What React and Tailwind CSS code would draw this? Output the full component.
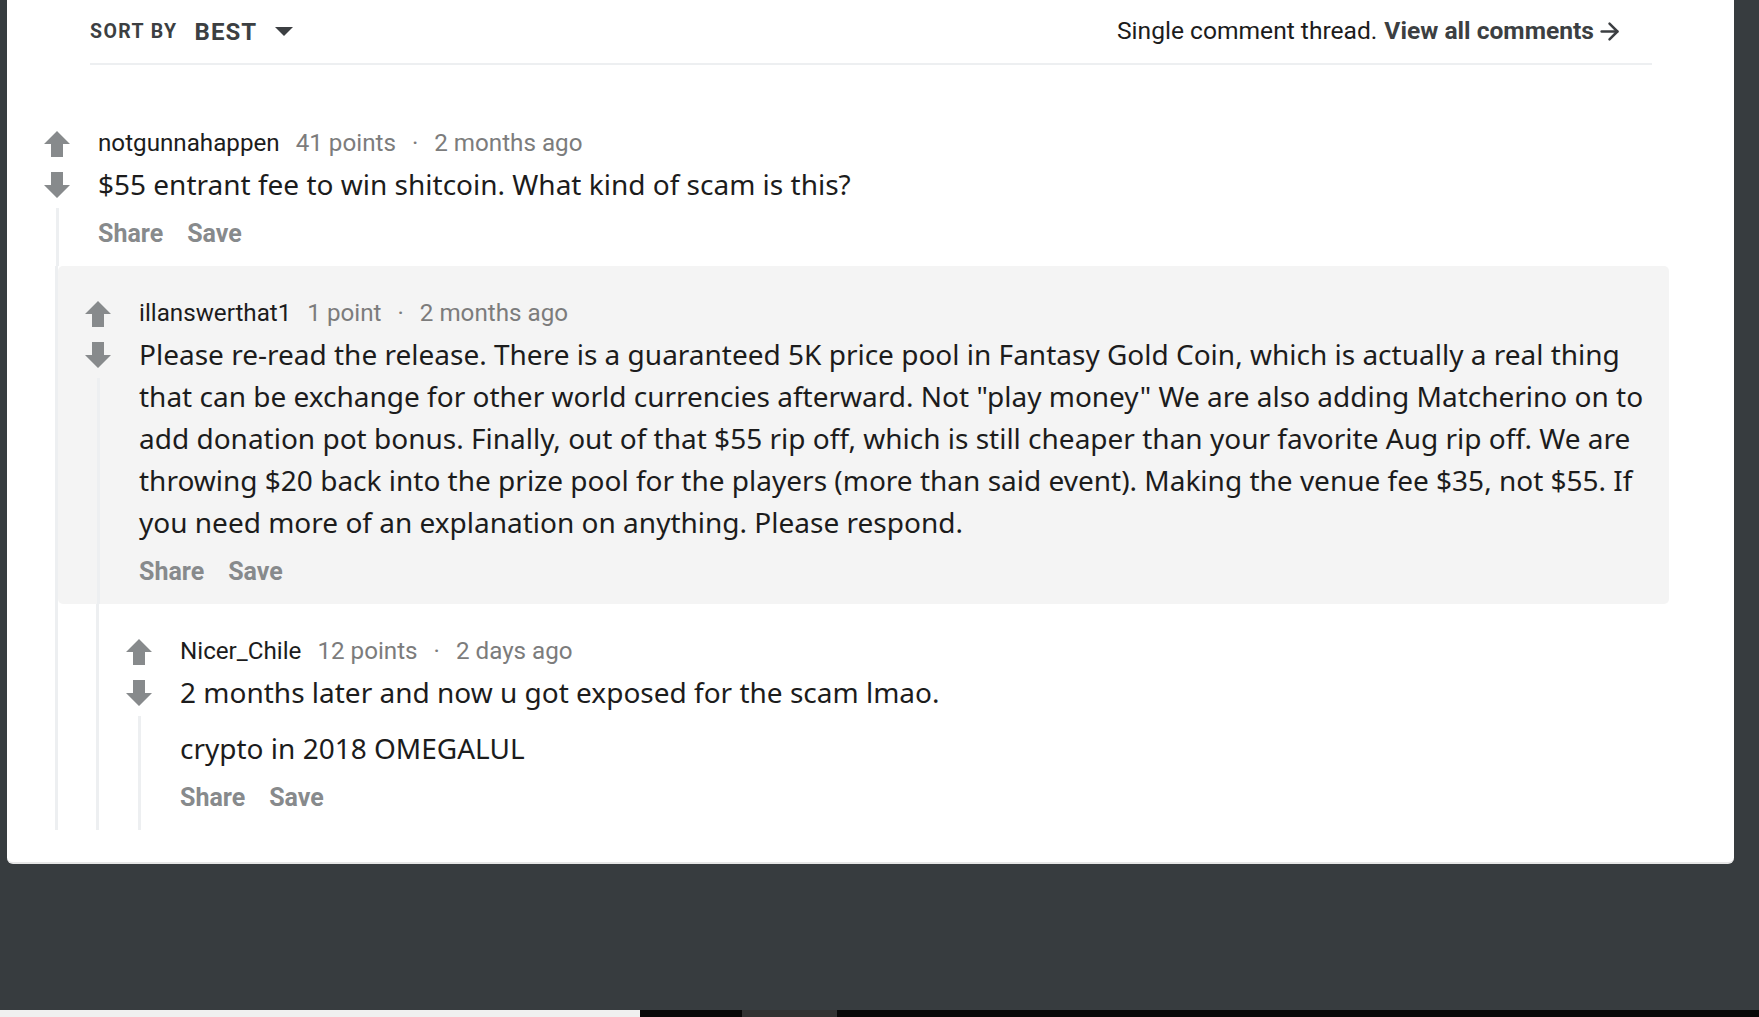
import { ArrowRight } from 'lucide-react';

const thread = {
  author: 'notgunnahappen',
  points: '41 points',
  time: '2 months ago',
  body: ['$55 entrant fee to win shitcoin. What kind of scam is this?'],
  replies: [
    {
      author: 'illanswerthat1',
      points: '1 point',
      time: '2 months ago',
      highlight: true,
      body: [
        'Please re-read the release. There is a guaranteed 5K price pool in Fantasy Gold Coin, which is actually a real thing that can be exchange for other world currencies afterward. Not "play money" We are also adding Matcherino on to add donation pot bonus. Finally, out of that $55 rip off, which is still cheaper than your favorite Aug rip off. We are throwing $20 back into the prize pool for the players (more than said event). Making the venue fee $35, not $55. If you need more of an explanation on anything. Please respond.',
      ],
      replies: [
        {
          author: 'Nicer_Chile',
          points: '12 points',
          time: '2 days ago',
          body: ['2 months later and now u got exposed for the scam lmao.', 'crypto in 2018 OMEGALUL'],
          replies: [],
        },
      ],
    },
  ],
};

const UpArrow = () => (
  <svg width="26" height="26" viewBox="0 0 26 26">
    <path d="M13 0 L26 13 H19 V26 H7 V13 H0 Z" fill="#878a8c" />
  </svg>
);

const DownArrow = () => (
  <svg width="26" height="26" viewBox="0 0 26 26">
    <path d="M7 0 H19 V13 H26 L13 26 L0 13 H7 Z" fill="#878a8c" />
  </svg>
);

const Comment = ({ comment }) => (
  <div>
    <div className={`flex pl-[27px] ${comment.highlight ? 'rounded-[5px] bg-[#f4f4f4]' : ''}`}>
      <div className="flex w-[26px] flex-col items-center pt-[35px]">
        <UpArrow />
        <div className="mt-[15px]">
          <DownArrow />
        </div>
        <div className="mt-[10px] w-[3px] flex-1 bg-[#edeff1]" />
      </div>
      <div className="ml-[28px] flex-1 pb-[19px] pr-[16px] pt-[34px]">
        <div className="flex h-[26px] items-center font-['Roboto',sans-serif] text-[24.2px] text-[#7c7c7c]">
          <span className="text-[#1c1c1c]">{comment.author}</span>
          <span className="ml-[16px]">{comment.points}</span>
          <span className="mx-[16px]">·</span>
          <span>{comment.time}</span>
        </div>
        <div className="mt-[7px] font-['Noto_Sans',sans-serif] text-[28px] leading-[42px] text-[#1c1c1c]">
          {comment.body.map((p, i) => (
            <p key={i} className={i > 0 ? 'mt-[14px]' : ''}>{p}</p>
          ))}
        </div>
        <div className="mt-[16px] flex h-[26px] items-center gap-[24px] font-['Roboto',sans-serif] text-[25px] font-bold text-[#878a8c]">
          <span>Share</span>
          <span>Save</span>
        </div>
      </div>
    </div>
    {comment.replies.length > 0 ? (
      <div className="ml-[38px] border-l-[3px] border-[#edeff1]">
        {comment.replies.map((r) => (
          <Comment key={r.author} comment={r} />
        ))}
      </div>
    ) : null}
  </div>
);

export default function App() {
  return (
    <div className="flex h-[1017px] w-full flex-col overflow-hidden bg-[#373c3f]">
      <div className="ml-[7px] h-[864px] w-[1727px] rounded-b-[6px] border-b-2 border-[#e6e6e6] bg-white">
        <div className="ml-[83px] flex h-[65px] w-[1562px] items-center justify-between border-b-2 border-[#edeff1] pr-[29px] font-['Roboto',sans-serif] text-[#3c3f42]">
          <div className="flex items-center">
            <span className="text-[19.5px] font-bold tracking-[1.4px]">SORT BY</span>
            <span className="ml-[17px] text-[24px] font-bold tracking-[1px]">BEST</span>
            <svg className="ml-[18px]" width="18" height="10" viewBox="0 0 18 10">
              <path d="M0 0 H18 L9 9 Z" fill="#3c3f42" />
            </svg>
          </div>
          <div className="flex items-center text-[24.6px] text-[#1c1c1c]">
            <span>Single comment thread.</span>
            <span className="ml-[7px] font-bold text-[#3c3f42]">View all comments</span>
            <ArrowRight size={27} strokeWidth={2.2} className="ml-[2px] text-[#3c3f42]" />
          </div>
        </div>
        <div className="pl-[10px] pr-[65px] pt-[31px]">
          <Comment comment={thread} />
        </div>
      </div>
      <div className="flex-1" />
      <div className="flex h-[7px]">
        <div className="w-[640px] bg-[#f0f0f0]" />
        <div className="w-[102px] bg-[#080808]" />
        <div className="w-[95px] bg-[#333333]" />
        <div className="flex-1 bg-[#080808]" />
      </div>
    </div>
  );
}
